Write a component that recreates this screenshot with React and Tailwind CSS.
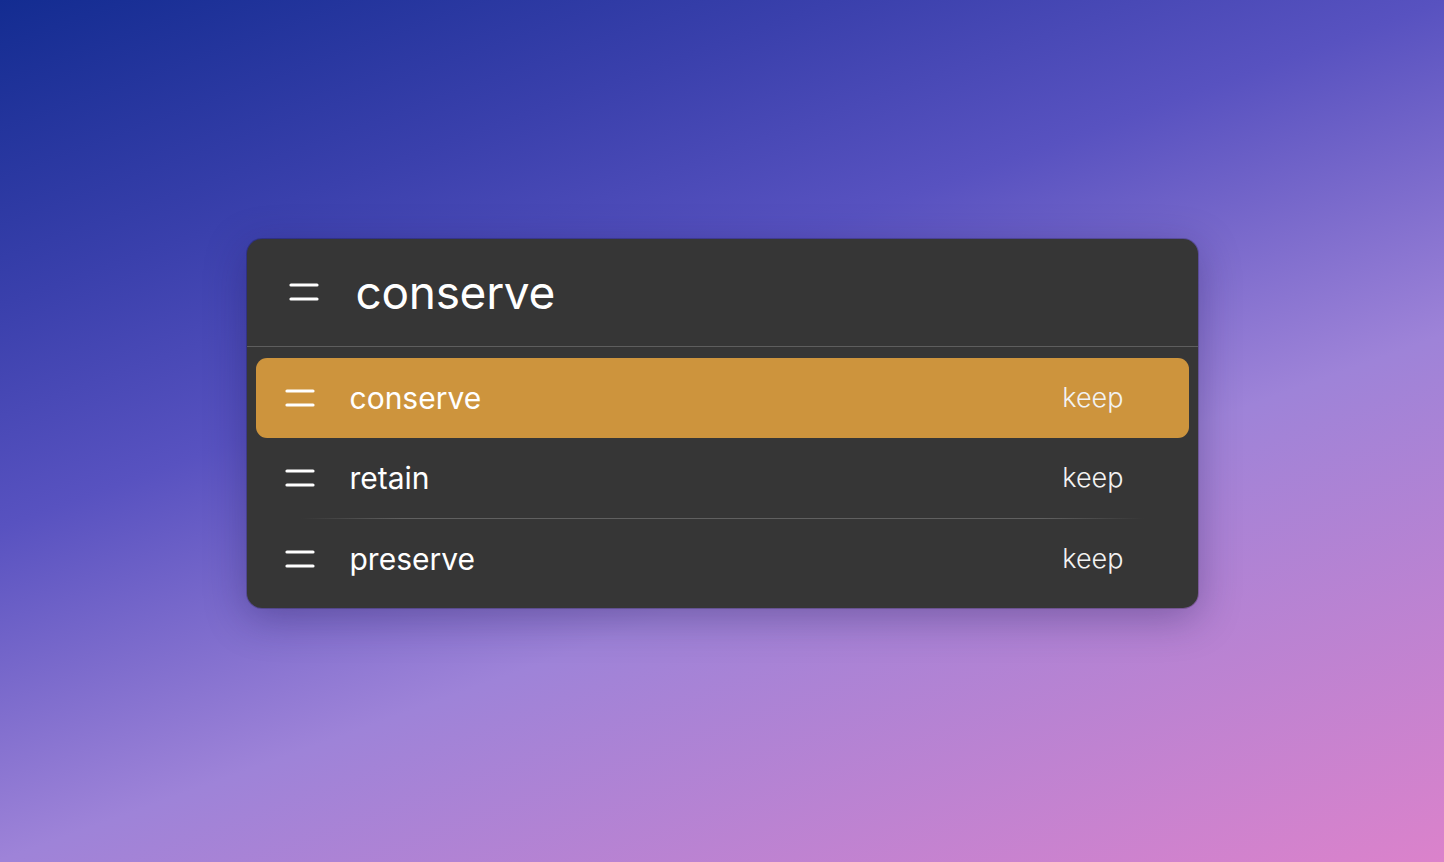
import React from 'react';

const results = [
  { word: 'conserve', hint: 'keep' },
  { word: 'retain', hint: 'keep' },
  { word: 'preserve', hint: 'keep' },
];

function LinesIcon({ className }) {
  return (
    <svg className={className} viewBox="0 0 30 18" fill="none" stroke="currentColor" strokeWidth={3.2} strokeLinecap="round">
      <path d="M2 2h26" />
      <path d="M2 16h26" />
    </svg>
  );
}

export default function App() {
  const selected = 0;

  return (
    <div
      className="flex h-screen w-full items-center justify-center pb-[16px] bg-[linear-gradient(160deg,#132c91_0%,#3a40ac_22%,#5852c0_38%,#9e83d8_62%,#db82cb_100%)]"
      style={{ fontFamily: 'Inter, "Noto Sans", sans-serif' }}
    >
      <div className="w-[951px] overflow-hidden rounded-[15px] bg-[#363636] shadow-[0_10px_40px_rgba(30,20,80,0.35)] ring-1 ring-black/20">
        <div className="flex h-[108px] items-center border-b border-[#5e5e5e] pl-[42px]">
          <LinesIcon className="h-[18px] w-[30px] text-white" />
          <span className="ml-[37px] text-[46px] leading-none tracking-[-0.3px] text-white">conserve</span>
        </div>

        <div className="px-[9px] pt-[11px] pb-[9px]">
          {results.map((r, i) => (
            <React.Fragment key={r.word}>
              {i === 2 && (
                <div className="mx-[45px] h-px bg-[linear-gradient(90deg,transparent,#606060_12%,#606060_88%,transparent)]" />
              )}
              <div
                className={
                  'flex h-[80px] items-center pl-[29px] pr-[65px] ' +
                  (i === selected ? 'rounded-[11px] bg-[#cd943d]' : '')
                }
              >
                <LinesIcon className="h-[18px] w-[30px] text-white" />
                <span className="ml-[35px] flex-1 text-[30px] leading-none text-white">{r.word}</span>
                <span className="text-[27px] font-light leading-none text-[#f2f2f2]">{r.hint}</span>
              </div>
            </React.Fragment>
          ))}
        </div>
      </div>
    </div>
  );
}
